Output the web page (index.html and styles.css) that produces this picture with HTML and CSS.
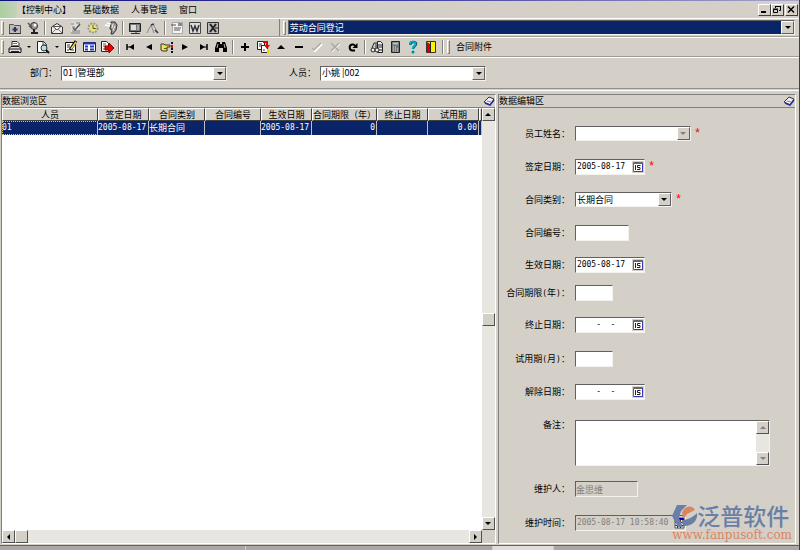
FILE: index.html
```
<!DOCTYPE html>
<html lang="zh-CN">
<head>
    <meta charset="UTF-8">
    <title>劳动合同登记</title>
    <link rel="stylesheet" href="styles.css">
</head>
<body>
<div class="app">

    <header class="menubar">
        <span class="corner"></span>
        <nav class="menu">
            <a href="#">【控制中心】</a>
            <a href="#">基础数据</a>
            <a href="#">人事管理</a>
            <a href="#">窗口</a>
        </nav>
        <div class="window-buttons">
            <button class="win-btn" aria-label="最小化"><svg viewBox="0 0 10 9"><path d="M2 7h5" stroke="#000" stroke-width="2"/></svg></button>
            <button class="win-btn" aria-label="还原"><svg viewBox="0 0 10 9" fill="none" stroke="#000"><path d="M3.5 3V1.5h5v4H7M3 1.5h6M1.5 4.5h4v3h-4zM1 4h5"/></svg></button>
            <button class="win-btn win-close" aria-label="关闭"><svg viewBox="0 0 10 9"><path d="M2 1.500l6 6M8 1.500l-6 6" stroke="#000" stroke-width="1.500"/></svg></button>
        </div>
    </header>

    <!-- 系统工具栏 -->
    <div class="toolbar toolbar-top">
        <div class="tools">
            <span class="grip"></span>
            <button class="tool" aria-label="文件夹"><svg viewBox="0 0 14 14"><path d="M1.500 3.500h4l1 1h6v8h-11z" fill="#bbb" stroke="#555"/><path d="M1 12.500h12" stroke="#333"/><path d="M7 6v5M4.500 8.500h5" stroke="#335" stroke-width="2"/></svg></button>
            <button class="tool" aria-label="用户"><svg viewBox="0 0 14 14"><circle cx="8" cy="5" r="3.500" fill="#999" stroke="#333"/><path d="M2 2l4 4M3 5l3 2" stroke="#555" stroke-width="1.500"/><circle cx="9" cy="4" r="1.500" fill="#fff"/><path d="M8 8v3M5 12h7" stroke="#222" stroke-width="2"/></svg></button>
            <span class="sep"></span>
            <button class="tool" aria-label="邮件"><svg viewBox="0 0 14 14"><path d="M1.500 6L7 2.500 12.500 6v6.500h-11z" fill="#eee" stroke="#333"/><path d="M3 5.500h8L7 9z" fill="#fff" stroke="#555"/><path d="M2 12l4-4M12 12L8 8" stroke="#777"/></svg></button>
            <button class="tool" aria-label="审批"><svg viewBox="0 0 14 14"><path d="M3 1h8v12H3z" fill="#ddd"/><path d="M3 3h3M8 2h4M4 6h3M4 10h8M3 12h9" stroke="#777"/><path d="M5 7l2 2 5-6" fill="none" stroke="#555" stroke-width="1.500"/></svg></button>
            <button class="tool" aria-label="时钟"><svg viewBox="0 0 14 14"><circle cx="7" cy="7" r="4.500" fill="#eee36d" stroke="#999" stroke-width="2" stroke-dasharray="2 1"/><path d="M7 4v3.500h3" fill="none" stroke="#555"/></svg></button>
            <button class="tool" aria-label="电话"><svg viewBox="0 0 14 14"><path d="M7 1h4l2 3-1 5-3 4H7l1-4-2-1z" fill="#999" stroke="#333"/><path d="M1 4l5 1M3 2l4 1" stroke="#fff" stroke-width="1.500"/><path d="M9 3l-1 4M11 5l-2 5" stroke="#eee"/></svg></button>
            <span class="sep"></span>
            <button class="tool" aria-label="终端"><svg viewBox="0 0 14 14"><path d="M1.500 2.500h11v8h-11z" fill="#777" stroke="#222"/><path d="M3 4h5v5H3z" fill="#ddd"/><path d="M10 4v5" stroke="#ddd"/><path d="M3 12.500h9M8 10v3" stroke="#333"/></svg></button>
            <button class="tool" aria-label="设计"><svg viewBox="0 0 14 14"><path d="M1 12L5 4l3 8M7 3l5 9" fill="none" stroke="#888"/><path d="M9 9l3 3M5 4l3-1" stroke="#333366" stroke-width="1.500"/></svg></button>
            <span class="sep"></span>
            <button class="tool" aria-label="报表"><svg viewBox="0 0 14 14"><path d="M2.500 1.500h10v11h-10z" fill="#f4f4f4" stroke="#aaa"/><path d="M1 4h5M4 7h7M4 9h6" stroke="#555"/><path d="M8 2h4v3H8z" fill="#888"/></svg></button>
            <button class="tool" aria-label="Word"><svg viewBox="0 0 14 14"><path d="M1.500 1.500h11v11h-11z" fill="#ddd" stroke="#444"/><path d="M3 4l2 6 2-5 2 5 2-6" fill="none" stroke="#333" stroke-width="1.500"/></svg></button>
            <button class="tool" aria-label="Excel"><svg viewBox="0 0 14 14"><path d="M1.500 1.500h11v11h-11z" fill="#bbb" stroke="#333"/><path d="M4 3l6 8M10 3l-6 8" stroke="#222" stroke-width="2"/><path d="M9 7h3" stroke="#222"/></svg></button>
        </div>
        <div class="address">
            <span class="grip"></span>
            <div class="combo combo-nav">
                <select aria-label="当前功能"><option>劳动合同登记</option></select>
                <span class="combo-arrow"></span>
            </div>
        </div>
    </div>

    <!-- 数据工具栏 -->
    <div class="toolbar toolbar-data">
        <span class="grip"></span>
        <button class="tool" aria-label="打印"><svg viewBox="0 0 14 14"><path d="M4 6V1.500h5l2 2V6" fill="#fff" stroke="#222"/><path d="M5 3.500h4M5 5.500h5" stroke="#777"/><path d="M3 6.500h8l2 2v4H1v-4z" fill="#ddd" stroke="#111"/><path d="M1 9h12M3 11.500h8" stroke="#222"/></svg></button>
        <button class="tool-drop" aria-label="打印选项"></button>
        <button class="tool" aria-label="预览"><svg viewBox="0 0 14 14"><path d="M1.500 1.500h6l3 3v8h-9z" fill="#fff" stroke="#222"/><path d="M7 1v4h4" fill="none" stroke="#444"/><circle cx="8" cy="8" r="3" fill="#b9dede" stroke="#333"/><path d="M10 10l3 3" stroke="#111" stroke-width="2"/></svg></button>
        <button class="tool-drop" aria-label="预览选项"></button>
        <button class="tool" aria-label="编辑"><svg viewBox="0 0 14 14"><path d="M1.500 2.500h10v10h-10z" fill="#fff" stroke="#111"/><path d="M3 5h3M3 7h3M3 10h2M8 10h2" stroke="#333"/><path d="M12 1L6 10" stroke="#111" stroke-width="3"/><path d="M12 2L7 9" stroke="#f1d83b" stroke-width="1.500"/></svg></button>
        <button class="tool" aria-label="表格"><svg viewBox="0 0 14 14"><path d="M1.500 2.500h12v9h-12z" fill="#fff" stroke="#223"/><path d="M2 3.500h11" stroke="#2338bd" stroke-width="2"/><path d="M3 6.500h3M8 6.500h4M3 9.500h3M8 9.500h4" stroke="#2338bd" stroke-width="2"/></svg></button>
        <button class="tool" aria-label="导出"><svg viewBox="0 0 14 14"><path d="M1.500 1.500h5l2 2v8h-7z" fill="#fff" stroke="#222"/><path d="M3 4h3M3 6h3M3 9h2" stroke="#555"/><path d="M5 6h4V3l5 5-5 5v-3H5z" fill="#f00000" stroke="#800"/></svg></button>
        <span class="sep"></span>
        <button class="tool" aria-label="首条"><svg viewBox="0 0 14 14"><path d="M3 4v6" stroke="#000" stroke-width="1.500"/><path d="M3 7h3" stroke="#000"/><path d="M10 4v6L5 7z"/></svg></button>
        <button class="tool" aria-label="上一条"><svg viewBox="0 0 14 14"><path d="M10 4v6L4 7z"/></svg></button>
        <button class="tool" aria-label="定位"><svg viewBox="0 0 14 14"><path d="M1 4h3l1 1h5v2H7v4H3L1 10z" fill="#f3e34a" stroke="#333"/><path d="M4 8.500h3" stroke="#655900"/><path d="M12 2v11" stroke="#111" stroke-width="2" stroke-dasharray="2 1"/><path d="M12 5v3" stroke="#e00" stroke-width="2"/></svg></button>
        <button class="tool" aria-label="下一条"><svg viewBox="0 0 14 14"><path d="M4 4v6l6-3z"/></svg></button>
        <button class="tool" aria-label="末条"><svg viewBox="0 0 14 14"><path d="M4 4v6l5-3z"/><path d="M11 4v6" stroke="#000" stroke-width="1.500"/><path d="M8 7h3" stroke="#000"/></svg></button>
        <button class="tool" aria-label="查找"><svg viewBox="0 0 14 14"><path d="M3 2h3v2h2V2h3l2 6v4H9V8H5v4H1V8z"/><path d="M4 4L3 8M10 4l1 4" stroke="#bbb"/></svg></button>
        <span class="sep"></span>
        <button class="tool" aria-label="新增"><svg viewBox="0 0 14 14"><path d="M7 3v8M3 7h8" stroke="#000" stroke-width="2"/></svg></button>
        <button class="tool" aria-label="复制新增"><svg viewBox="0 0 14 14"><path d="M1.500 1.500h7v8h-7z" fill="#fff" stroke="#222"/><path d="M3 4h3M3 6h3" stroke="#333"/><path d="M5.500 5.500h6v7h-6z" fill="#fff" stroke="#222"/><path d="M7 10h2" stroke="#333"/><path d="M7 1h5v4h2l-3 4-3-4h2V3H7z" fill="#e60000"/><path d="M12 9v4" stroke="#edd500" stroke-width="2"/></svg></button>
        <button class="tool" aria-label="修改"><svg viewBox="0 0 14 14"><path d="M3 9h8L7 5z"/></svg></button>
        <button class="tool" aria-label="删除"><svg viewBox="0 0 14 14"><path d="M3 7h8" stroke="#000" stroke-width="2"/></svg></button>
        <button class="tool" aria-label="保存" disabled><svg viewBox="0 0 14 14" fill="none"><path d="M3 9l2 2 7-7" stroke="#fff" stroke-width="2"/><path d="M2 8l2 2 7-7" stroke="#aaa" stroke-width="1.500"/></svg></button>
        <button class="tool" aria-label="取消" disabled><svg viewBox="0 0 14 14" fill="none"><path d="M4 4l8 8M12 4l-8 8" stroke="#fff"/><path d="M3 3l8 8M11 3l-8 8" stroke="#aaa" stroke-width="1.500"/></svg></button>
        <button class="tool" aria-label="刷新"><svg viewBox="0 0 14 14"><path d="M9 10.500H6.500a3 3 0 1 1 3-4" fill="none" stroke="#000" stroke-width="2"/><path d="M11.500 3v5h-5z"/></svg></button>
        <span class="sep"></span>
        <button class="tool" aria-label="筛选"><svg viewBox="0 0 14 14" fill="#eee" stroke="#222"><path d="M7.500 1.500h3l2 2v9h-5z"/><path d="M8 5h4M8 7h4M8 10h4"/><circle cx="3" cy="10" r="2"/><circle cx="7" cy="10" r="2"/><path d="M2 8l2-5h3M6 8V4" fill="none"/></svg></button>
        <button class="tool" aria-label="计算器"><svg viewBox="0 0 14 14"><path d="M3.500 1.500h8v11h-8z" fill="#777" stroke="#222"/><path d="M5 3.500h5" stroke="#9ccaca" stroke-width="2"/><path d="M5 7h5M5 9h5M5 11h5" stroke="#ddd" stroke-dasharray="1 1"/><path d="M9 7h1" stroke="#e00"/></svg></button>
        <button class="tool" aria-label="帮助"><svg viewBox="0 0 14 14"><path d="M4.500 5V3.500C5 1.500 10 1.500 10 4c0 2-3 2-3 5" fill="none" stroke="#00606c" stroke-width="2.500"/><path d="M4 4.500V3C5 1 9.500 1 9.500 4c0 2-3 2-3 5" fill="none" stroke="#00b8d0" stroke-width="1.500"/><circle cx="7" cy="12" r="1.500" fill="#008ba0"/></svg></button>
        <button class="tool" aria-label="退出"><svg viewBox="0 0 14 14"><path d="M2.500 1.500h9v11h-9z" fill="#fff200" stroke="#333"/><path d="M3 2l3 2v9l-3-1z" fill="#d00000"/><path d="M6.500 2v11" stroke="#222"/></svg></button>
        <span class="sep"></span>
        <span class="grip"></span>
        <button class="text-tool">合同附件</button>
    </div>

    <section class="filters">
        <label for="dept">部门：</label>
        <div class="combo combo-dept">
            <select id="dept"><option>01 |管理部</option></select>
            <span class="combo-arrow"></span>
        </div>
        <label for="person">人员：</label>
        <div class="combo combo-person">
            <select id="person"><option>小姚 |002</option></select>
            <span class="combo-arrow"></span>
        </div>
    </section>

    <main class="workspace">
        <section class="panel browse">
            <h2 class="panel-title">数据浏览区
                <svg class="pin" viewBox="0 0 12 10"><path d="M1 6l5-5 5 2-4 6z" fill="#eee" stroke="#333"/><path d="M2 7l5 2 4-5" fill="none" stroke="#2929a8" stroke-width="1.500"/><path d="M4 5l4 1" stroke="#888"/></svg>
            </h2>
            <div class="grid-area">
                <div class="grid-scroll">
                    <table class="grid">
                        <colgroup>
                            <col class="c-name"><col class="c-date"><col class="c-type"><col class="c-type">
                            <col class="c-date"><col class="c-term"><col class="c-date"><col class="c-date"><col>
                        </colgroup>
                        <thead>
                            <tr><th>人员</th><th>签定日期</th><th>合同类别</th><th>合同编号</th><th>生效日期</th><th>合同期限（年）</th><th>终止日期</th><th>试用期</th><th></th></tr>
                        </thead>
                        <tbody>
                            <tr class="selected"><td class="focus num">01</td><td class="num">2005-08-17</td><td>长期合同</td><td></td><td class="num">2005-08-17</td><td class="num right">0</td><td></td><td class="num right">0.00</td><td></td></tr>
                        </tbody>
                    </table>
                </div>
                <div class="vbar">
                    <button class="sb up" aria-label="向上"></button>
                    <span class="thumb"></span>
                    <button class="sb down" aria-label="向下"></button>
                </div>
                <div class="hbar">
                    <button class="sb left" aria-label="向左"></button>
                    <span class="thumb"></span>
                    <button class="sb next" aria-label="向右"></button>
                </div>
            </div>
        </section>

        <section class="panel edit">
            <h2 class="panel-title">数据编辑区
                <svg class="pin" viewBox="0 0 12 10"><path d="M1 6l5-5 5 2-4 6z" fill="#eee" stroke="#333"/><path d="M2 7l5 2 4-5" fill="none" stroke="#2929a8" stroke-width="1.500"/><path d="M4 5l4 1" stroke="#888"/></svg>
            </h2>
            <form class="form">
                <label for="emp">员工姓名：</label>
                <div class="field">
                    <div class="combo combo-emp"><select id="emp" disabled><option></option></select><span class="combo-arrow off"></span></div>
                    <span class="must">*</span>
                </div>

                <label for="sign">签定日期：</label>
                <div class="field">
                    <div class="date"><input id="sign" value="2005-08-17"><button type="button" class="cal" aria-label="选择日期"><svg viewBox="0 0 12 12"><path d="M1.500 1.500h9v9h-9z" fill="#fff" stroke="#666"/><path d="M1 2.500h10" stroke="#666"/><path d="M10.500 2v8.500H2" fill="none" stroke="#3838b8"/><path d="M3.500 4v5M8.500 4.500h-3v2h2.500v2H5" fill="none" stroke="#222"/></svg></button></div>
                    <span class="must">*</span>
                </div>

                <label for="type">合同类别：</label>
                <div class="field">
                    <div class="combo combo-type"><select id="type"><option>长期合同</option></select><span class="combo-arrow"></span></div>
                    <span class="must">*</span>
                </div>

                <label for="code">合同编号：</label>
                <div class="field"><input id="code" class="box box-code"></div>

                <label for="start">生效日期：</label>
                <div class="field">
                    <div class="date"><input id="start" value="2005-08-17"><button type="button" class="cal" aria-label="选择日期"><svg viewBox="0 0 12 12"><path d="M1.500 1.500h9v9h-9z" fill="#fff" stroke="#666"/><path d="M1 2.500h10" stroke="#666"/><path d="M10.500 2v8.500H2" fill="none" stroke="#3838b8"/><path d="M3.500 4v5M8.500 4.500h-3v2h2.500v2H5" fill="none" stroke="#222"/></svg></button></div>
                </div>

                <label for="years">合同期限<span class="num">(</span>年<span class="num">)</span>：</label>
                <div class="field"><input id="years" class="box box-num"></div>

                <label for="end">终止日期：</label>
                <div class="field">
                    <div class="date"><input id="end" value="    -  -"><button type="button" class="cal" aria-label="选择日期"><svg viewBox="0 0 12 12"><path d="M1.500 1.500h9v9h-9z" fill="#fff" stroke="#666"/><path d="M1 2.500h10" stroke="#666"/><path d="M10.500 2v8.500H2" fill="none" stroke="#3838b8"/><path d="M3.500 4v5M8.500 4.500h-3v2h2.500v2H5" fill="none" stroke="#222"/></svg></button></div>
                </div>

                <label for="trial">试用期<span class="num">(</span>月<span class="num">)</span>：</label>
                <div class="field"><input id="trial" class="box box-num"></div>

                <label for="cancel">解除日期：</label>
                <div class="field">
                    <div class="date"><input id="cancel" value="    -  -"><button type="button" class="cal" aria-label="选择日期"><svg viewBox="0 0 12 12"><path d="M1.500 1.500h9v9h-9z" fill="#fff" stroke="#666"/><path d="M1 2.500h10" stroke="#666"/><path d="M10.500 2v8.500H2" fill="none" stroke="#3838b8"/><path d="M3.500 4v5M8.500 4.500h-3v2h2.500v2H5" fill="none" stroke="#222"/></svg></button></div>
                </div>

                <label for="memo" class="memo-label">备注：</label>
                <div class="field">
                    <div class="memo">
                        <textarea id="memo"></textarea>
                        <div class="memo-bar">
                            <button type="button" class="sb up off" aria-label="向上"></button>
                            <button type="button" class="sb down off" aria-label="向下"></button>
                        </div>
                    </div>
                </div>

                <label for="keeper">维护人：</label>
                <div class="field"><input id="keeper" class="box box-keeper" value="金思维" disabled></div>

                <label for="ktime">维护时间：</label>
                <div class="field">
                    <div class="date date-off"><input id="ktime" value="2005-08-17 10:58:40" disabled><button type="button" class="cal" aria-label="选择时间" disabled><svg viewBox="0 0 12 12"><path d="M2 1h9v10H2z" fill="#fff" stroke="#555"/><path d="M2 2h9" stroke="#0000c0" stroke-width="2"/><path d="M2 5.500h9M2 8.500h9M4.500 3v8M7.500 3v8" stroke="#a00028"/></svg></button></div>
                </div>
            </form>

            <div class="brand">
                <svg class="brand-mark" viewBox="0 0 26 24"><path d="M5 1h10L9 7l-2 7 4 9H6L0 12z" fill="#6a7fa6"/><path d="M10 9C12 2 20 0 23 6l-8 4-3 5z" fill="#d98562"/><path d="M25 9c1 7-4 13-13 13-2-2-3-4-2-6 6 0 11-3 15-7z" fill="#6a7fa6"/></svg>
                <span class="brand-name">泛普软件</span>
                <span class="brand-url">www.fanpusoft.com</span>
            </div>
        </section>
    </main>

    <footer class="statusbar"><span></span><span></span><span class="lit"></span><span></span></footer>
</div>
</body>
</html>
```
FILE: styles.css
```
* {
    box-sizing: border-box;
}

body {
    margin: 0;
    background: #d4d0c8;
    color: #000;
    font: 9px/12px "Noto Sans CJK SC", sans-serif;
}

button, input, select, textarea {
    margin: 0;
    padding: 0;
    border: 0;
    border-radius: 0;
    background: none;
    color: inherit;
    font: inherit;
    appearance: none;
    outline: 0;
}

svg {
    display: block;
}

.num {
    font-family: "DejaVu Sans Mono", monospace;
    font-size: 8px;
}

.app {
    display: flex;
    flex-direction: column;
    height: 100vh;
    min-height: 550px;
    border-right: 1px solid #404040;
}

/* menu */

.menubar {
    display: flex;
    align-items: center;
    height: 18px;
    border-top: 1px solid #3b3b96;
    border-image: linear-gradient(90deg, #10107c, #3a3aa0 50%, #a6a6c8) 1;
    border-width: 1px 0 0;
}

.corner {
    align-self: stretch;
    width: 17px;
    background: linear-gradient(90deg, #a9cf9f, #c3d2b8);
}

.menu {
    display: flex;
    flex: 1;
    gap: 12px;
}

    .menu a {
        color: #000;
        text-decoration: none;
    }

.window-buttons {
    display: flex;
    padding-right: 1px;
}

.win-btn {
    width: 13px;
    height: 12px;
    border: 1px solid;
    border-color: #fff #404040 #404040 #fff;
    background: #d4d0c8;
}

    .win-btn svg {
        width: 10px;
        height: 9px;
    }

.win-close {
    margin-left: 1px;
}

/* toolbars */

.toolbar {
    display: flex;
    align-items: center;
    height: 19px;
    border-top: 1px solid #fff;
    border-bottom: 1px solid #a09c94;
}

.toolbar-data {
    height: 20px;
}

.tools {
    display: flex;
    align-items: center;
    width: 35%;
    height: 100%;
    border-right: 1px solid #808080;
}

.address {
    display: flex;
    flex: 1;
    align-items: center;
    padding: 0 4px 0 2px;
}

.grip {
    width: 3px;
    height: 14px;
    margin: 0 2px 0 1px;
    border: 1px solid;
    border-color: #fff #808080 #808080 #fff;
}

.tool {
    display: flex;
    align-items: center;
    justify-content: center;
    width: 18px;
    height: 16px;
}

    .tool svg {
        width: 14px;
        height: 14px;
    }

.tool-drop {
    width: 10px;
    height: 16px;
}

    .tool-drop::before {
        content: "";
        display: block;
        width: 0;
        margin: 0 auto;
        border: 2px solid transparent;
        border-top-color: #000;
        border-bottom: 0;
    }

.sep {
    width: 2px;
    height: 14px;
    margin: 0 2px;
    border-left: 1px solid #808080;
    border-right: 1px solid #fff;
}

.text-tool {
    padding: 0 4px;
}

/* combo boxes */

.combo {
    display: flex;
    height: 15px;
    border: 1px solid;
    border-color: #606060 #f4f2ee #f4f2ee #606060;
    background: #fff;
}

    .combo select {
        flex: 1;
        min-width: 0;
        padding-left: 1px;
        line-height: 12px;
    }

.combo-arrow {
    display: flex;
    align-items: center;
    justify-content: center;
    width: 13px;
    border: 1px solid;
    border-color: #fff #606060 #606060 #fff;
    background: #d4d0c8;
    pointer-events: none;
}

    .combo-arrow::before {
        content: "";
        border: 3px solid transparent;
        border-top-color: #000;
        border-bottom: 0;
    }

    .combo-arrow.off::before {
        border-top-color: #808080;
    }

.combo-nav {
    flex: 1;
}

    .combo-nav select {
        background: #0a246a;
        color: #fff;
    }

.filters {
    display: flex;
    align-items: center;
    height: 32px;
    border-top: 1px solid #fff;
    border-bottom: 1px solid #909090;
    padding-left: 30px;
}

.combo-dept {
    width: 166px;
    margin: 0 62px 0 4px;
}

.combo-person {
    width: 166px;
    margin-left: 4px;
}

/* panels */

.workspace {
    display: grid;
    grid-template-columns: 62% 1fr;
    gap: 4px;
    flex: 1;
    min-height: 0;
    margin-top: 1px;
    padding: 3px 3px 0 1px;
    border-top: 1px solid #fff;
}

.panel {
    display: flex;
    flex-direction: column;
    min-width: 0;
    border: 1px solid;
    border-color: #808080 #fff #fff #808080;
}

.browse {
    margin-right: -2px;
}

.panel-title {
    display: flex;
    align-items: center;
    justify-content: space-between;
    height: 13px;
    margin: 0;
    border-bottom: 1px solid #808080;
    font-size: 9px;
    font-weight: normal;
    line-height: 12px;
}

.pin {
    width: 12px;
    height: 10px;
}

.grid-area {
    display: grid;
    grid-template: 1fr 13px / 1fr 13px;
    flex: 1;
    min-height: 0;
}

.grid-scroll {
    overflow: hidden;
    background: #fff;
}

.grid {
    width: 100%;
    border-collapse: separate;
    border-spacing: 0;
    table-layout: fixed;
}

.c-name {
    width: 96px;
}

.c-date {
    width: 51px;
}

.c-type {
    width: 56px;
}

.c-term {
    width: 65px;
}

.grid th {
    height: 13px;
    padding: 0;
    border: 1px solid;
    border-color: #fff #404040 #404040 #fff;
    background: #d4d0c8;
    font-weight: normal;
    line-height: 11px;
    white-space: nowrap;
}

.grid td {
    height: 14px;
    padding: 0;
    border-right: 1px solid #c0c0c0;
    line-height: 12px;
    white-space: nowrap;
}

.selected {
    background: #0a246a;
    color: #fff;
}

.grid .focus {
    outline: 1px dotted #d8c878;
    outline-offset: -1px;
}

.grid .right {
    padding-right: 1px;
    text-align: right;
}

/* scroll bars */

.vbar, .hbar, .memo-bar {
    display: flex;
    justify-content: space-between;
    background: #e8e6e1;
}

.vbar, .memo-bar {
    flex-direction: column;
}

.hbar {
    justify-content: flex-start;
}

.sb, .thumb {
    display: flex;
    align-items: center;
    justify-content: center;
    width: 13px;
    height: 13px;
    border: 1px solid;
    border-color: #fff #505050 #505050 #fff;
    background: #d4d0c8;
}

    .sb::before {
        content: "";
        border: 3px solid transparent;
    }

.sb.up::before {
    border-bottom-color: #000;
    border-top: 0;
}

.sb.down::before {
    border-top-color: #000;
    border-bottom: 0;
}

.sb.left::before {
    border-right-color: #000;
    border-left: 0;
}

.sb.next::before {
    border-left-color: #000;
    border-right: 0;
}

.sb.up.off::before {
    border-bottom-color: #808080;
}

.sb.down.off::before {
    border-top-color: #808080;
}

.next {
    margin-left: auto;
}

/* edit form */

.edit {
    position: relative;
}

.form {
    display: grid;
    grid-template-columns: 75px 1fr;
    grid-template-rows: 33px 33px 33px 33px 32px 24px 40px 28px 38px 64px 28px 40px;
    align-items: center;
    padding-top: 9px;
}

    .form label {
        padding-right: 4px;
        text-align: right;
        white-space: nowrap;
    }

    .form .memo-label {
        align-self: start;
        padding-top: 8px;
    }

.field {
    display: flex;
    align-items: center;
    gap: 3px;
    padding: 0 25px 0 1px;
}

.must {
    color: #f00;
    font: 12px/12px "Liberation Mono", monospace;
}

.combo-emp {
    width: 116px;
}

.combo-type {
    width: 97px;
}

.box, .date, .memo {
    height: 16px;
    border: 1px solid;
    border-color: #606060 #f4f2ee #f4f2ee #606060;
    background: #fff;
}

.box-code {
    width: 54px;
}

.box-num {
    width: 38px;
}

.box-keeper {
    width: 63px;
}

.box:disabled, .date-off {
    background: #d4d0c8;
    color: #808080;
}

.date {
    display: flex;
    align-items: center;
    width: 70px;
}

    .date input {
        flex: 1;
        min-width: 0;
        padding-left: 1px;
        font: 8px/12px "DejaVu Sans Mono", monospace;
    }

.date-off {
    width: 111px;
}

.cal {
    width: 12px;
    height: 12px;
    background: #d4d0c8;
}

    .cal svg {
        width: 12px;
        height: 12px;
    }

.memo {
    display: flex;
    flex: 1;
    height: 46px;
}

    .memo textarea {
        flex: 1;
        min-width: 0;
        resize: none;
    }

/* logo over the lower right corner */

.brand {
    position: absolute;
    right: 3px;
    bottom: 1px;
    display: grid;
    grid-template-columns: 25px auto;
    row-gap: 1px;
    color: #6a7fa6;
    pointer-events: none;
}

.brand-mark {
    width: 26px;
    height: 24px;
}

.brand-name {
    font-size: 23px;
    font-weight: 500;
    line-height: 22px;
}

.brand-url {
    grid-column: 1 / 3;
    color: #d98562;
    font: 12px/13px "DejaVu Serif", serif;
}

.statusbar {
    display: flex;
    gap: 1px;
    height: 5px;
    margin-top: 2px;
    border-top: 1px solid #606060;
    background: #d4d0c8;
}

    .statusbar span {
        flex: 1;
        background: #aaa8a4;
    }

    .statusbar .lit {
        flex: 0 0 60px;
        background: #e0ded8;
    }
```
